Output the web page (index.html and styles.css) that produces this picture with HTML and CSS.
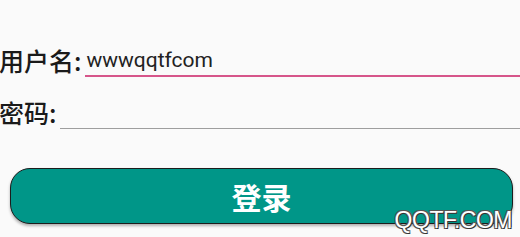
FILE: index.html
```html
<!DOCTYPE html>
<html lang="zh-CN">
<head>
    <meta charset="UTF-8">
    <title>登录</title>
    <link rel="stylesheet" href="styles.css">
</head>
<body>
    <div class="login-form">
        <div class="form-row">
            <label class="field-label">用户名:</label>
            <div class="field-input active">wwwqqtfcom</div>
        </div>
        <div class="form-row">
            <label class="field-label">密码:</label>
            <div class="field-input"></div>
        </div>
        <button class="login-button">登录</button>
    </div>
    <div class="watermark">QQTF.COM</div>
</body>
</html>
```

FILE: styles.css
```css
* {
    margin: 0;
    padding: 0;
    box-sizing: border-box;
}
body {
    font-family: Roboto, "Noto Sans CJK SC", sans-serif;
    background-color: #fafafa;
    color: #212121;
    width: 520px;
    height: 237px;
    overflow: hidden;
    position: relative;
}
.login-form {
    padding-top: 43px;
}
.form-row {
    display: flex;
    align-items: flex-end;
    height: 34px;
    margin-bottom: 18px;
}
.field-label {
    font-family: "Noto Sans CJK SC", sans-serif;
    font-size: 25px;
    font-weight: 500;
    line-height: 32px;
    margin-left: -1px;
    padding-bottom: 1px;
    color: #1a1a1a;
}
.field-input {
    flex: 1;
    margin-left: 4px;
    height: 30px;
    font-size: 21px;
    line-height: 26px;
    padding-left: 1px;
    color: #222;
    border-bottom: 1px solid #9e9e9e;
}
.field-input.active {
    border-bottom: 2px solid #d6558a;
}
.login-button {
    display: block;
    margin: 39px 7px 0 10px;
    width: 503px;
    height: 56px;
    border: 1px solid #1c1c1c;
    border-radius: 20px;
    background-color: #009688;
    color: #fff;
    font-family: "Noto Sans CJK SC", sans-serif;
    font-size: 30px;
    font-weight: 700;
    box-shadow: 0 2px 3px rgba(0, 0, 0, 0.3);
}
.watermark {
    position: absolute;
    right: 8px;
    bottom: 3px;
    font-family: "Liberation Sans", sans-serif;
    font-size: 23px;
    color: #fff;
    letter-spacing: -0.5px;
    text-shadow: 1px 1px 0 #333, -1px -1px 0 #555, 1px -1px 0 #555, -1px 1px 0 #555;
}
```
